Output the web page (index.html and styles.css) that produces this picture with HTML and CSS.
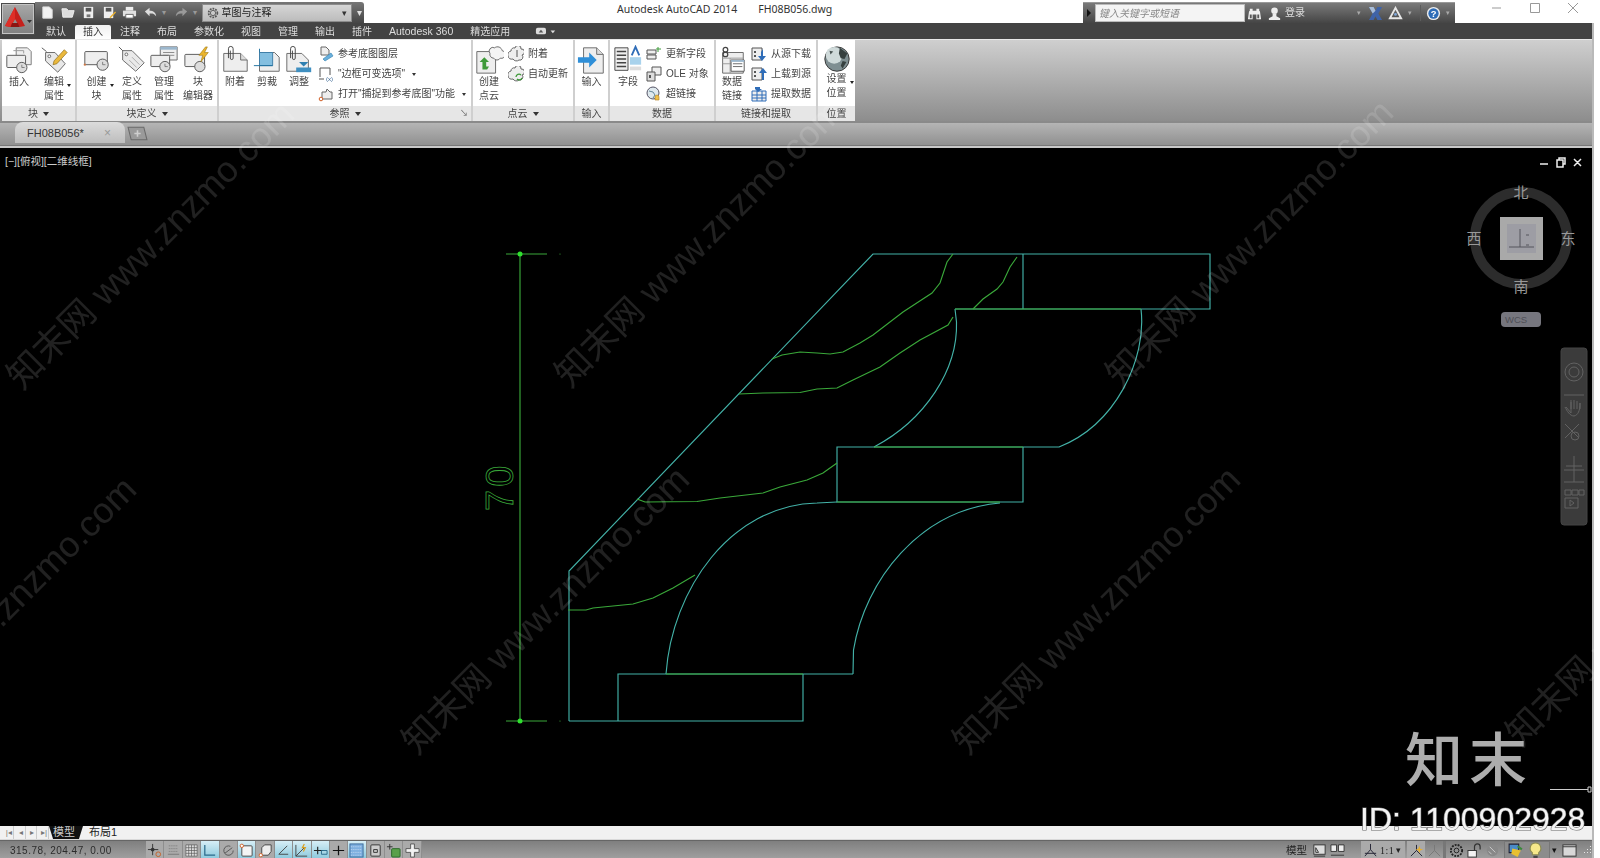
FILE: index.html
```html
<!DOCTYPE html>
<html lang="zh">
<head>
<meta charset="utf-8">
<title>Autodesk AutoCAD 2014</title>
<link rel="stylesheet" href="styles.css">
</head>
<body>
<div class="app">
  <header class="titlebar">
    <div class="appbtn"><svg viewBox="0 0 34 32" width="34" height="32"><path d="M14 4 L24 23 L18.500 24 L14 16 L9.500 24 L4 23 Z" fill="#c5201c"/><path d="M14 4 L14 16 L9.500 24 L4 23 Z" fill="#df2f28"/><path d="M11 20 H17 L18.500 24 H9.500 Z" fill="#8e1512"/><path d="M26 17h5l-2.500 3z" fill="#333"/></svg></div>
    <div class="qat">
      <svg class="q" viewBox="0 0 16 16"><path d="M3 2h7l3 3v9H3z" fill="#f2f2f2" stroke="#ddd"/></svg>
      <svg class="q" viewBox="0 0 16 16"><path d="M1 4h5l2 2h6l-2 7H2z" fill="#ddd" stroke="#eee"/></svg>
      <svg class="q" viewBox="0 0 16 16"><path d="M3 2h10v12H3z" fill="#eee"/><path d="M5 3h6v4H5z" fill="#555"/><path d="M6 10h4v3H6z" fill="#777"/></svg>
      <svg class="q" viewBox="0 0 16 16"><path d="M2 2h10v12H2z" fill="#eee"/><path d="M4 3h6v4H4z" fill="#555"/><path d="M9 14l6-6-1-1-6 6z" fill="#e9b02c"/></svg>
      <svg class="q" viewBox="0 0 16 16"><path d="M4 2h8v4H4z" fill="#eee"/><path d="M1 6h14v6H1z" fill="#e0e0e0"/><path d="M4 10h8v4H4z" fill="#fff" stroke="#666"/></svg>
      <svg class="q" viewBox="0 0 16 16"><path d="M2 7l5-4v3c4 0 7 2 7 6-2-3-4-3-7-3v3z" fill="#ddd"/></svg>
      <span class="qdd">▾</span>
      <svg class="q" viewBox="0 0 16 16"><path d="M14 7L9 3v3C5 6 2 8 2 12c2-3 4-3 7-3v3z" fill="#9a9a9a"/></svg>
      <span class="qdd">▾</span>
      <div class="combo"><svg viewBox="0 0 16 16" width="14" height="14"><circle cx="8" cy="8" r="5" fill="none" stroke="#555" stroke-width="2" stroke-dasharray="2 1.200"/><circle cx="8" cy="8" r="3" fill="none" stroke="#555"/></svg><span class="combo-t">草图与注释</span><span class="combo-a">▾</span></div>
      <span class="qmore">▾</span>
    </div>
    <div class="apptitle"><span>Autodesk AutoCAD 2014</span><span>FH08B056.dwg</span></div>
    <div class="infobar">
      <span class="tri"></span>
      <span class="search">键入关键字或短语</span>
      <svg class="ib b1" viewBox="0 0 16 16"><path d="M2 7a2 2 0 0 1 1-2V3h3v2h4V3h3v2a2 2 0 0 1 1 2l1 7h-5V9H6v5H1z" fill="#eee"/><path d="M3 9h2v4H3zM11 9h2v4h-2z" fill="#555"/></svg>
      <svg class="ib" viewBox="0 0 16 16"><circle cx="8" cy="5" r="3.500" fill="#eee"/><path d="M6 8h4v3l4 2v2H2v-2l4-2z" fill="#eee"/></svg>
      <span class="login">登录</span>
      <span class="idd d1">▾</span>
      <svg class="ib" viewBox="0 0 16 16"><path d="M1 1h5l2 4 2-4h5l-4 7 4 7h-5l-2-4-2 4H1l4-7z" fill="#3f63a8"/><path d="M1 1h5l2 4-3 3z" fill="#a9bdd8"/></svg>
      <svg class="ib" viewBox="0 0 16 16"><path d="M8 2l6 11H2z" fill="none" stroke="#e8e8e8" stroke-width="2"/><circle cx="8" cy="9" r="1.500" fill="#7ea6d8"/></svg>
      <span class="idd">▾</span>
      <span class="isep"></span>
      <svg class="ib" viewBox="0 0 16 16"><circle cx="8" cy="8" r="7" fill="#eee"/><circle cx="8" cy="8" r="5.500" fill="#2f6db8"/><text x="8" y="11.500" text-anchor="middle" class="qm">?</text></svg>
      <span class="idd">▾</span>
    </div>
    <div class="winctl">
      <svg viewBox="0 0 12 12" width="12" height="12"><path d="M1 6h9" stroke="#999"/></svg>
      <svg viewBox="0 0 12 12" width="12" height="12"><path d="M1.500 1.500h9v9h-9z" fill="none" stroke="#999"/></svg>
      <svg viewBox="0 0 12 12" width="12" height="12"><path d="M1 1l10 10M11 1L1 11" stroke="#999"/></svg>
    </div>
  </header>

  <div class="main">
    <nav class="tabs">
      <span>默认</span><span class="on">插入</span><span>注释</span><span>布局</span><span>参数化</span><span>视图</span><span>管理</span><span>输出</span><span>插件</span><span class="lat">Autodesk 360</span><span>精选应用</span>
      <svg class="tabico" viewBox="0 0 24 12" width="22" height="11"><rect x="1" y="2" width="11" height="7" rx="2" fill="#ddd"/><path d="M4 7l2.500-3L9 7z" fill="#555"/><path d="M17 5h5l-2.500 3z" fill="#ddd"/></svg>
    </nav>

    <section class="ribbon">
      <div class="panel p1">
        <div class="body cols-a">
          <div class="big"><svg class="i32" viewBox="0 0 32 32"><path d="M13 3h12l4 4v14H13z" fill="#eee" stroke="#777"/><path d="M10 6h11v3" fill="none" stroke="#999"/><rect x="3" y="11" width="20" height="13" rx="1" fill="#eee" stroke="#555"/><circle cx="19" cy="24" r="5.500" fill="#ddd" stroke="#555"/><path d="M19 21v3h3" fill="none" stroke="#555" stroke-width=".7"/></svg><span class="lbl">插入</span></div>
          <div class="big"><svg class="i32" viewBox="0 0 32 32"><path d="M3 3l5 4" stroke="#555"/><path d="M7 8h10l11 12-8 9L7 17z" fill="#e8e8e8" stroke="#666"/><circle cx="11" cy="12" r="1.500" fill="#fff" stroke="#666"/><path d="M16 17l11-12 3 3-11 12-4 1z" fill="#eab83c" stroke="#8a6a16" stroke-width=".7"/></svg><span class="lbl">编辑<br>属性<i class="dd"></i></span></div>
        </div>
        <div class="ptitle">块<i class="pa"></i></div>
      </div>
      <div class="panel p2">
        <div class="body cols-b">
          <div class="big"><svg class="i32" viewBox="0 0 32 32"><rect x="3" y="7" width="24" height="14" rx="1" fill="#eee" stroke="#555"/><circle cx="22" cy="21" r="6" fill="#ddd" stroke="#555"/><path d="M22 18v3h3" fill="none" stroke="#555" stroke-width=".7"/><circle cx="3" cy="21" r="1.200" fill="#c74"/></svg><span class="lbl">创建<br>块<i class="dd"></i></span></div>
          <div class="big"><svg class="i32" viewBox="0 0 32 32"><path d="M2 2l5 5" stroke="#555"/><path d="M6 6h10l13 13-9 9L6 16z" fill="#eaeaea" stroke="#666"/><circle cx="10" cy="10" r="1.500" fill="#fff" stroke="#666"/><path d="M13 16l8 8M16 13l8 8" stroke="#aaa"/></svg><span class="lbl">定义<br>属性</span></div>
          <div class="big"><svg class="i32" viewBox="0 0 32 32"><path d="M12 2h18v14H12z" fill="#eee" stroke="#666"/><path d="M12 2h18v3H12z" fill="#9bb6cc"/><path d="M15 8h12M15 11h12" stroke="#888"/><rect x="2" y="11" width="20" height="12" rx="1" fill="#eee" stroke="#555"/><circle cx="17" cy="23" r="5.500" fill="#ddd" stroke="#555"/><path d="M17 20v3h3" fill="none" stroke="#555" stroke-width=".7"/></svg><span class="lbl">管理<br>属性</span></div>
          <div class="big"><svg class="i32" viewBox="0 0 32 32"><rect x="2" y="10" width="21" height="13" rx="1" fill="#eee" stroke="#555"/><circle cx="18" cy="23" r="5.500" fill="#ddd" stroke="#555"/><path d="M24 2l-7 9h4l-2 7 8-10h-4l3-6z" fill="#eab42c" stroke="#9a7410" stroke-width=".6"/></svg><span class="lbl">块<br>编辑器</span></div>
        </div>
        <div class="ptitle">块定义<i class="pa"></i></div>
      </div>
      <div class="panel p3">
        <div class="body cols-c">
          <div class="big"><svg class="i32" viewBox="0 0 32 32"><path d="M4 9h18l7 7v12H4z" fill="#eee" stroke="#666"/><path d="M22 9v7h7" fill="#ddd" stroke="#666"/><path d="M9 14V4a2 2 0 0 1 5 0v10a1.500 1.500 0 0 1-3 0V6" fill="none" stroke="#444"/></svg><span class="lbl">附着</span></div>
          <div class="big"><svg class="i32" viewBox="0 0 32 32"><path d="M8 8h16l5 5v15H8z" fill="#eee" stroke="#666"/><path d="M8 8h14v14H8z" fill="#84bfe0" stroke="#3c7da8"/><path d="M2 22h20M8 4v4" stroke="#1d6f9e"/></svg><span class="lbl">剪裁</span></div>
          <div class="big"><svg class="i32" viewBox="0 0 32 32"><path d="M3 9h16l7 7v12H3z" fill="#eee" stroke="#666"/><path d="M7 14V4a2 2 0 0 1 5 0v10a1.500 1.500 0 0 1-3 0V6" fill="none" stroke="#444"/><path d="M13 24h16v5H13z" fill="#3f8fc0"/><path d="M21 23l-5-5h10z" fill="#2f7fb0"/></svg><span class="lbl">调整</span></div>
          <div class="list">
            <div class="row"><svg class="i16" viewBox="0 0 16 16"><path d="M3 1h5l3 3v5H3z" fill="#eee" stroke="#666"/><path d="M5 13l8-6 2 3-8 5z" fill="#6ab0dc" stroke="#2f7fb0" stroke-width=".6"/></svg><span>参考底图图层</span></div>
            <div class="row"><svg class="i16" viewBox="0 0 16 16"><path d="M2 11V2h10v7" fill="none" stroke="#555"/><path d="M1 13h5" stroke="#555"/><text x="8" y="15" class="xt">(x)</text></svg><span>"边框可变选项"<i class="rd"></i></span></div>
            <div class="row"><svg class="i16" viewBox="0 0 16 16"><path d="M4 6h4l1-3 3 3h2v7H4z" fill="#eee" stroke="#666"/><circle cx="3" cy="13" r="1.800" fill="#fff" stroke="#d2622a"/></svg><span>打开"捕捉到参考底图"功能<i class="rd"></i></span></div>
          </div>
        </div>
        <div class="ptitle">参照<i class="pa"></i><i class="corner">↘</i></div>
      </div>
      <div class="panel p4">
        <div class="body cols-d">
          <div class="big"><svg class="i32" viewBox="0 0 32 32"><path d="M3 7h20v23H3z" fill="#eee" stroke="#666"/><path d="M17 9a4 4 0 0 1 5-6 5 5 0 0 1 8 3 4 4 0 0 1-2 8 4 4 0 0 1-7 0 4 4 0 0 1-4-5z" fill="#f4f4f4" stroke="#666"/><path d="M14 26H9v-8H6l5-5 5 5h-3v5h3z" fill="#3f9a3a"/></svg><span class="lbl">创建<br>点云</span></div>
          <div class="list">
            <div class="row"><svg class="i16" viewBox="0 0 16 16"><path d="M3 5a3 3 0 0 1 4-3 3 3 0 0 1 6 1 3 3 0 0 1 1 6 3 3 0 0 1-3 5 4 4 0 0 1-6-1 3 3 0 0 1-2-8z" fill="#eee" stroke="#666"/><path d="M9 4v7" stroke="#555"/></svg><span>附着</span></div>
            <div class="row"><svg class="i16" viewBox="0 0 16 16"><path d="M3 5a3 3 0 0 1 4-3 3 3 0 0 1 6 1 3 3 0 0 1 1 6 3 3 0 0 1-3 5 4 4 0 0 1-6-1 3 3 0 0 1-2-8z" fill="#eee" stroke="#666"/><path d="M8 11a3 3 0 0 1 5-2M14 12a3 3 0 0 1-5 1" fill="none" stroke="#3f9a3a" stroke-width="1.300"/></svg><span>自动更新</span></div>
          </div>
        </div>
        <div class="ptitle">点云<i class="pa"></i></div>
      </div>
      <div class="panel p5">
        <div class="body">
          <div class="big"><svg class="i32" viewBox="0 0 32 32"><path d="M7 3h14l7 7v20H7z" fill="#eee" stroke="#666"/><path d="M21 3v7h7" fill="#ddd" stroke="#666"/><path d="M1 13h12V8l8 8-8 8v-5H1z" fill="#2f8fd8"/></svg><span class="lbl">输入</span></div>
        </div>
        <div class="ptitle">输入</div>
      </div>
      <div class="panel p6">
        <div class="body cols-e">
          <div class="big"><svg class="i32" viewBox="0 0 32 32"><path d="M2 3h14v24H2z" fill="#eee" stroke="#444"/><path d="M4 7h10M4 11h10M4 15h10M4 19h10M4 23h10" stroke="#444" stroke-width="1.500"/><path d="M18 13h12v8H18z" fill="#a8d2ec"/><path d="M18 23h12v4H18z" fill="#ddd"/><path d="M20 11l4-9 4 9" fill="none" stroke="#2f6db8" stroke-width="2"/></svg><span class="lbl">字段</span></div>
          <div class="list">
            <div class="row"><svg class="i16" viewBox="0 0 16 16"><path d="M1 4h9v4H1zM1 9h9v4H1z" fill="#eee" stroke="#555"/><path d="M12 1v5M10 3h5" stroke="#3f9a3a"/></svg><span>更新字段</span></div>
            <div class="row"><svg class="i16" viewBox="0 0 16 16"><path d="M6 1h9v8H6z" fill="#eee" stroke="#555"/><path d="M1 6h8v9H1z" fill="#ddd" stroke="#555"/><path d="M3 9h2v3H3z" fill="#555"/></svg><span>OLE 对象</span></div>
            <div class="row"><svg class="i16" viewBox="0 0 16 16"><circle cx="7" cy="7" r="6" fill="#dfe9ee" stroke="#556"/><path d="M3 5l4 1 2 3-2 3" fill="none" stroke="#689"/><path d="M9 11a2 2 0 0 1 4 0v3H9z" fill="#f0c24a" stroke="#b07b18" stroke-width=".6"/></svg><span>超链接</span></div>
          </div>
        </div>
        <div class="ptitle">数据</div>
      </div>
      <div class="panel p7">
        <div class="body cols-f">
          <div class="big"><svg class="i32" viewBox="0 0 32 32"><path d="M6 8h22v22H6z" fill="#eee" stroke="#666"/><path d="M6 14h22M6 20h22M14 14v16" stroke="#999"/><path d="M15 16h14v12H15z" fill="#fff" stroke="#555"/><path d="M17 20h10M17 23h10" stroke="#666"/><path d="M15 16h14v2H15z" fill="#9bb6cc"/><circle cx="9" cy="5" r="2.500" fill="none" stroke="#444" stroke-width="1.300"/><circle cx="9" cy="10" r="2.500" fill="none" stroke="#444" stroke-width="1.300"/></svg><span class="lbl">数据<br>链接</span></div>
          <div class="list">
            <div class="row"><svg class="i16" viewBox="0 0 16 16"><path d="M1 2h10v12H1z" fill="#eee" stroke="#555"/><path d="M3 5h2v2H3zM3 9h2v2H3z" fill="#555"/><path d="M12 3v7h3l-4 5-4-5h3V6z" fill="#2f6db8"/></svg><span>从源下载</span></div>
            <div class="row"><svg class="i16" viewBox="0 0 16 16"><path d="M1 2h10v12H1z" fill="#eee" stroke="#555"/><path d="M3 5h2v2H3zM3 9h2v2H3z" fill="#555"/><path d="M11 14V7H8l4-5 4 5h-3v7z" fill="#2f6db8"/></svg><span>上载到源</span></div>
            <div class="row"><svg class="i16" viewBox="0 0 16 16"><path d="M1 5h14v10H1z" fill="#eee" stroke="#2f6db8"/><path d="M1 9h14M1 12h14M6 5v10M11 5v10" stroke="#2f6db8"/><path d="M4 1h5v2h2l-4 3-3-3z" fill="#2f6db8"/></svg><span>提取数据</span></div>
          </div>
        </div>
        <div class="ptitle">链接和提取</div>
      </div>
      <div class="panel p8">
        <div class="body">
          <div class="big"><svg class="i32" viewBox="0 0 32 32"><circle cx="16" cy="15" r="13" fill="#7f8f92" stroke="#333"/><circle cx="13" cy="11" r="9" fill="#cfdada"/><path d="M19 3l8 6-3 6-4-1-2-5zM22 17l4 1-4 7-2-3z" fill="#36403f"/><path d="M8 6l4 1-3 3z" fill="#4a5554"/></svg><span class="lbl tall">设置<br>位置<i class="dd"></i></span></div>
        </div>
        <div class="ptitle">位置</div>
      </div>
    </section>

    <div class="filetabs">
      <div class="ftab"><span>FH08B056*</span><em>×</em></div>
      <div class="fnew"><svg viewBox="0 0 20 14" width="21" height="15"><path d="M1 1h15l3 12H4z" fill="#9a9a9a" stroke="#6a6a6a"/><path d="M10 4v6M7 7h6" stroke="#cfcfcf" stroke-width="1.500"/></svg></div>
    </div>

    <div class="canvas">
      <svg class="cad" viewBox="0 148 1592 678" width="1592" height="678">
        <text x="5" y="165" class="vp">[−][俯视][二维线框]</text>
        <g class="dim">
          <path d="M520 254V721M506 254H547M506 721H547"/>
          <circle cx="520" cy="254" r="2.500" class="dot"/><circle cx="520" cy="721" r="2.500" class="dot"/>
          <circle cx="560" cy="254" r=".6" class="speck"/><circle cx="560" cy="721" r=".6" class="speck"/>
          <text transform="translate(513 511) rotate(-90)" class="seventy">70</text>
        </g>
        <g class="cy">
          <path d="M569 721V571L873 254H1210V309H955M1023 254V309H1210"/>
          <path d="M955 309L956.500 322C958 370 925 420 874 447"/>
          <path d="M1141 309C1147 360 1115 425 1059 447H837V502H1023V447"/>
          <path d="M569 721H803V674H618V721M853 674H803"/>
          <path d="M666 674C672 590 730 505 817 503L837 502"/>
          <path d="M853 674L853.500 650C865 580 920 510 1000 503"/>
        </g>
        <g class="gr">
          <path d="M772 359L782 355 800 352 817 353 830 354 843 352 860 343 873 335 903 312 932 293 940 283 947 262 953 254"/>
          <path d="M739 394L763 393 800 392.500 817 389 837 388 853 380 880 367 900 353 920 340 948 325 953 317"/>
          <path d="M973 309L983 299 997 289 1003 282 1010 267 1017 257"/>
          <path d="M637 499L645 502 697 501.500 720 498 763 493 780 487 807 480 823 473 837 463"/>
          <path d="M568 610L586 610 593 608 633 604 653 598 673 588 695 575"/>
          <path d="M874 447H1023M955 309H1141M837 502H1000"/>
          <path d="M666 674H803"/>
        </g>
        <g class="winbtns">
          <path d="M1540 164h8M1557 160h6v7h-6zM1559 160v-2h6v6h-2M1574 159l7 7M1581 159l-7 7"/>
        </g>
        <circle cx="1521" cy="238" r="46" class="ring"/>
        <rect x="1500" y="217" width="43" height="43" class="cube"/>
        <rect x="1507" y="224" width="29" height="29" class="cube2"/>
        <path d="M1509 247h25M1520 229v18M1526 235h3M1526 245h3" class="cubeg"/>
        <text x="1521" y="198" class="cp">北</text>
        <text x="1521" y="292" class="cp">南</text>
        <text x="1474" y="244" class="cp">西</text>
        <text x="1568" y="244" class="cp">东</text>
        <rect x="1501" y="312" width="40" height="15" rx="4" class="wcsb"/>
        <text x="1505" y="323" class="wcs">WCS</text>
        <rect x="1561" y="348" width="26" height="177" rx="3" class="nav"/>
        <g class="navg">
          <circle cx="1574" cy="372" r="9"/><circle cx="1574" cy="372" r="5"/>
          <path d="M1564 395h20"/>
          <path d="M1566 407l5 6v-11m0 7v-9m3 9v-9m3 9v-8m3 8v-6c0 8-2 12-6 13-4 0-7-5-9-9"/>
          <path d="M1565 424l14 14M1579 424l-14 14"/><circle cx="1575" cy="436" r="4"/>
          <path d="M1574 456v26M1566 466h16M1564 470h20"/>
          <path d="M1564 482h20M1565 490h6v5h-6zM1572 490h6v5h-6zM1579 490h5v5h-5zM1565 498h13v10h-13zM1570 500l4 3-4 3z"/>
        </g>
      </svg>
    </div>

    <div class="layouttabs">
      <div class="navbtns"><span>|◂</span><span>◂</span><span>▸</span><span>▸|</span></div>
      <span class="lt on">模型</span><span class="lt">布局1</span>
    </div>

    <footer class="status">
      <span class="coords">315.78, 204.47, 0.00</span>
      <div class="sbtns">
        <span class="sb"><svg viewBox="0 0 16 16"><path d="M6 1v12M1 7h11" stroke="#333"/><circle cx="6" cy="7" r="2" fill="#333"/><circle cx="12" cy="12" r="2.500" fill="none" stroke="#c5622a"/></svg></span>
        <span class="sb"><svg viewBox="0 0 16 16"><path d="M3 3h10M3 6h10M3 9h10" stroke="#777" stroke-dasharray="1 1"/><path d="M2 12h12" stroke="#777"/></svg></span>
        <span class="sb"><svg viewBox="0 0 16 16"><path d="M2 2h12v12H2zM2 5h12M2 8h12M2 11h12M5 2v12M8 2v12M11 2v12" fill="#ddd" stroke="#555" stroke-width=".7"/></svg></span>
        <span class="sb on"><svg viewBox="0 0 16 16"><path d="M3 2v11h11" fill="none" stroke="#2a6a8a" stroke-width="1.300"/></svg></span>
        <span class="sb"><svg viewBox="0 0 16 16"><path d="M13 8a5 5 0 1 1-3-4.500" fill="none" stroke="#555"/><path d="M4 11l8-6" stroke="#555"/></svg></span>
        <span class="sb on"><svg viewBox="0 0 16 16"><rect x="3" y="3" width="11" height="11" rx="1" fill="#f4f4f4" stroke="#444"/><circle cx="3" cy="3" r="1.800" fill="#fff" stroke="#d2622a"/></svg></span>
        <span class="sb"><svg viewBox="0 0 16 16"><path d="M4 12V5l3-3h7v7l-3 4H4z" fill="#eee" stroke="#444"/><circle cx="3" cy="13" r="1.800" fill="#fff" stroke="#d2622a"/></svg></span>
        <span class="sb on"><svg viewBox="0 0 16 16"><path d="M12 3L3 12h10" fill="none" stroke="#444"/></svg></span>
        <span class="sb on"><svg viewBox="0 0 16 16"><path d="M2 2v12h12M2 14l9-9" fill="none" stroke="#444"/><path d="M11 1l-2 4h3l-2 4" fill="none" stroke="#d9a020" stroke-width="1.300"/></svg></span>
        <span class="sb on"><svg viewBox="0 0 16 16"><path d="M1 8h10M5 4v8" stroke="#222" stroke-width="1.200"/><path d="M9 8h6v4H9z" fill="none" stroke="#2a6a8a"/></svg></span>
        <span class="sb"><svg viewBox="0 0 16 16"><path d="M8 3v10M2 8h12" stroke="#111" stroke-width="1.300"/></svg></span>
        <span class="sb on"><svg viewBox="0 0 16 16"><rect x="1" y="1" width="14" height="14" fill="#7fb0e0" stroke="#3a6a9a"/><path d="M2 4h12M2 7h12M2 10h12M2 13h12" stroke="#c6dcf2" stroke-dasharray="1 1"/></svg></span>
        <span class="sb"><svg viewBox="0 0 16 16"><rect x="3" y="2" width="10" height="12" rx="1" fill="#ccc" stroke="#333"/><path d="M6 7h4v3H6z" fill="none" stroke="#333"/></svg></span>
        <span class="sb"><svg viewBox="0 0 16 16"><rect x="6" y="6" width="9" height="9" rx="1" fill="#5aa04a" stroke="#2a6a2a"/><path d="M1 4h6M4 1v6" stroke="#333"/></svg></span>
        <span class="sb"><svg viewBox="0 0 16 16"><path d="M6 1h4v5h5v4h-5v5H6v-5H1V6h5z" fill="#f2f2f2" stroke="#555"/></svg></span>
      </div>
      <div class="sright">
        <span class="mdl">模型</span>
        <span class="sb2"><svg viewBox="0 0 16 16"><rect x="2" y="2" width="12" height="10" fill="#ddd" stroke="#333"/><path d="M4 10V5l3 5zM2 14h12" stroke="#333" fill="none"/></svg></span>
        <span class="sb2"><svg viewBox="0 0 16 16"><path d="M1 2h6v7H1zM9 2h6v7H9z" fill="#eee" stroke="#333"/><path d="M1 13h14" stroke="#333"/></svg></span>
        <span class="sgap"></span>
        <span class="scale"><svg viewBox="0 0 16 16" width="15" height="15"><path d="M8 1v6L2 14M8 7l6 7M2 11h12" fill="none" stroke="#223"/></svg><b>1:1</b><i>▾</i></span>
        <span class="sb2 pad"><svg viewBox="0 0 16 16"><path d="M8 2v6L2 14M8 8l6 6" fill="none" stroke="#223"/><path d="M11 3l1 3 3 1-3 1-1 3-1-3-3-1 3-1z" fill="#e8b030"/></svg></span>
        <span class="sb2"><svg viewBox="0 0 16 16"><path d="M8 2v6L2 14M8 8l6 6" fill="none" stroke="#777"/></svg></span>
        <span class="ssep"></span>
        <span class="sb2"><svg viewBox="0 0 16 16"><circle cx="8" cy="8" r="6" fill="none" stroke="#222" stroke-width="2" stroke-dasharray="2 1.200"/><circle cx="8" cy="8" r="2.500" fill="none" stroke="#222"/></svg></span>
        <span class="sb2"><svg viewBox="0 0 16 16"><rect x="1" y="8" width="9" height="7" fill="#f2f2f2" stroke="#333"/><path d="M8 8V4a3 3 0 0 1 6 0v3" fill="none" stroke="#333" stroke-width="1.300"/></svg></span>
        <span class="sb2"><svg viewBox="0 0 16 16"><circle cx="8" cy="8" r="6" fill="#888"/><path d="M5 4l6 6M4 9l3 3" stroke="#ccc"/></svg></span>
        <span class="sbox"><svg viewBox="0 0 16 16" width="17" height="17"><path d="M2 2h9v8H2z" fill="#4a8ac8" stroke="#223"/><path d="M5 6l8 2-3 6-6-3z" fill="#e8c030"/><path d="M10 4l4 3" stroke="#3a8a3a" stroke-width="2"/></svg><svg viewBox="0 0 16 16" width="17" height="17"><path d="M8 1a5 5 0 0 1 3 9v2H5v-2a5 5 0 0 1 3-9z" fill="#f6e88a" stroke="#8a8a50"/><path d="M6 14h4" stroke="#444" stroke-width="2"/></svg></span>
        <span class="sarr">▾</span>
        <span class="sb2"><svg viewBox="0 0 16 16"><rect x="1" y="2" width="14" height="12" fill="#d8d8d8" stroke="#333"/><path d="M1 4h14" stroke="#333"/></svg></span>
        <span class="grip"><svg viewBox="0 0 12 12" width="12" height="12"><path d="M10 2h1v1h-1zM7 5h1v1H7zM10 5h1v1h-1zM4 8h1v1H4zM7 8h1v1H7zM10 8h1v1h-1z" fill="#e6e6e6"/></svg></span>
      </div>
    </footer>
  </div>
  <div class="sidemark"></div>

  <svg class="overlay" viewBox="0 0 1600 858" width="1600" height="858">
    <g class="wm">
      <text transform="translate(22 391) rotate(-45)">知末网 www.znzmo.com</text>
      <text transform="translate(570 389) rotate(-45)">知末网 www.znzmo.com</text>
      <text transform="translate(1121 389) rotate(-45)">知末网 www.znzmo.com</text>
      <text transform="translate(-136 766) rotate(-45)">知末网 www.znzmo.com</text>
      <text transform="translate(417 756) rotate(-45)">知末网 www.znzmo.com</text>
      <text transform="translate(968 756) rotate(-45)">知末网 www.znzmo.com</text>
      <text transform="translate(1521 748) rotate(-45)">知末网 www.znzmo.com</text>
    </g>
    <text x="1405" y="781" class="brand">知末</text>
    <path d="M1550 789.500H1588M1588 787h3v5h-3z" class="ucs"/>
    <text x="1360" y="830" class="idtxt">ID: 1100902928</text>
  </svg>
</div>
</body>
</html>
```

FILE: styles.css
```css
* { box-sizing: border-box; }
html, body { margin: 0; padding: 0; background: #fff; }
body { width: 1600px; height: 858px; overflow: hidden; font: 10px/14px "Liberation Sans", "Noto Sans CJK SC", sans-serif; color: #444; }
.app { position: relative; width: 1600px; height: 858px; }
svg { display: block; }
i, em { font-style: normal; }

/* title bar */
.titlebar { display: flex; height: 23px; align-items: flex-start; }
.appbtn { position: absolute; left: 1px; top: 3px; width: 34px; height: 32px; z-index: 3; background: linear-gradient(#a8a8a8, #7f7f7f); border: 1px solid #4a4a4a; box-shadow: inset 0 0 0 1px #c4c4c4; }
.appbtn svg { margin: -1px; }
.qat { display: flex; flex: none; align-items: center; margin: 2px 0 0 35px; width: 329px; height: 21px; padding-left: 5px; background: linear-gradient(#777, #454545); border-radius: 0 3px 0 0; filter: blur(.3px); }
.q { width: 15px; height: 15px; margin-right: 5.500px; flex: none; }
.qdd { width: 8px; margin-left: -3px; margin-right: 6px; color: #999; font-size: 8px; text-align: center; }
.combo { display: flex; flex: none; align-items: center; width: 150px; height: 18px; padding: 0 4px 0 3px; background: linear-gradient(#d6d6d6, #bcbcbc); border: 1px solid #8c8c8c; margin-left: -3px; }
.combo-t { margin-left: 2px; color: #222; font-size: 10px; }
.combo-a { margin-left: auto; color: #333; font-size: 9px; }
.qmore { margin-left: 3px; width: 10px; color: #e0e0e0; font-size: 10px; text-align: center; }
.apptitle { display: flex; flex: none; gap: 21px; margin: 1px 0 0 253px; width: 466px; font: 10.500px/16px "Noto Sans", sans-serif; color: #333; }
.infobar { display: flex; flex: none; align-items: center; width: 372px; height: 21px; margin-top: 2px; padding-left: 4px; background: linear-gradient(#7a7a7a, #454545); border-top: 1px solid #999; filter: blur(.3px); }
.tri { flex: none; border-left: 4px solid #111; border-top: 4px solid transparent; border-bottom: 4px solid transparent; margin-right: 4px; }
.search { flex: none; width: 150px; height: 18px; line-height: 17px; padding-left: 3px; background: #f4f4f4; border: 1px solid #bbb; color: #888; font-style: italic; }
.ib { width: 15px; height: 15px; flex: none; margin-left: 5px; }
.ib.b1 { margin-left: 2px; }
.login { flex: none; width: 26px; margin-left: 3px; color: #ddd; font-size: 10px; }
.idd { flex: none; width: 9px; margin-left: 2px; color: #aaa; font-size: 7px; text-align: center; }
.d1 { margin-left: 43px; }
.isep { flex: none; width: 1px; height: 16px; margin-left: 6px; background: #5c5c5c; }
.qm { font: bold 10px "Liberation Sans", sans-serif; fill: #fff; }
.winctl { display: flex; gap: 26px; margin: 2px 0 0 36px; }

/* main window */
.main { width: 1594px; height: 835px; border-right: 2px solid #b9b9b9; overflow: hidden; position: relative; background: #d9d9d9; }
.sidemark { position: absolute; right: 0; top: 18px; width: 6px; height: 12px; background: #2a5f9a; border-radius: 6px 0 0 6px; z-index: -1; }
.tabs { display: flex; gap: 17px; align-items: center; height: 16px; padding-left: 46px; background: #434343; color: #ddd; line-height: 15px; filter: blur(.3px); }
.tabs .on { margin: 2px -8px 0; padding: 0 8px; height: 14px; line-height: 14px; background: linear-gradient(#f0f0f0, #fff); color: #333; border-radius: 2px 2px 0 0; }
.tabs .lat { font-size: 10.500px; }
.tabico { margin-left: 8px; }

/* ribbon */
.ribbon { display: flex; height: 82px; padding-left: 2px; border-top: 1px solid #e8e8e8; background: linear-gradient(#cfcfcf, #8d8d8d); filter: blur(.3px); }
.panel { display: flex; flex-direction: column; background: #fff; border-right: 2px solid #cfcfcf; }
.p1 { width: 75px; } .p2 { width: 142px; } .p3 { width: 254px; } .p4 { width: 102px; }
.p5 { width: 35px; } .p6 { width: 106px; } .p7 { width: 102px; } .p8 { width: 37px; border-right: 0; }
.body { flex: 1; display: grid; padding-top: 5px; align-content: start; }
.cols-a { grid-template-columns: 34px 36px; }
.cols-b { grid-template-columns: 37px 34px 30px 38px; padding-left: 1px; }
.cols-c { grid-template-columns: 32px 32px 32px 1fr; }
.cols-d { grid-template-columns: 32px 1fr; }
.cols-e { grid-template-columns: 36px 1fr; }
.cols-f { grid-template-columns: 32px 1fr; }
.big { display: flex; flex-direction: column; align-items: center; text-align: center; }
.i32 { width: 30px; height: 30px; flex: none; }
.lbl { position: relative; white-space: nowrap; }
.lbl.tall { margin-top: -3px; }
.dd { position: absolute; right: -7px; top: 9px; border-top: 3px solid #222; border-left: 2px solid transparent; border-right: 2px solid transparent; }
.list { display: flex; flex-direction: column; gap: 4px; padding-top: 1px; margin-left: 3px; }
.cols-e .list { margin-left: 0; }
.row { display: flex; align-items: center; gap: 4px; height: 16px; white-space: nowrap; }
.i16 { width: 16px; height: 16px; flex: none; }
.xt { font: 6px "Liberation Sans", sans-serif; fill: #2f5f8f; }
.rd { display: inline-block; margin-left: 7px; vertical-align: middle; border-top: 3px solid #333; border-left: 2px solid transparent; border-right: 2px solid transparent; }
.ptitle { position: relative; height: 15px; line-height: 15px; text-align: center; background: #e6e6e6; color: #444; }
.pa { display: inline-block; margin-left: 5px; vertical-align: middle; border-top: 4px solid #333; border-left: 3px solid transparent; border-right: 3px solid transparent; }
.corner { position: absolute; right: 3px; top: 0; font-size: 8px; color: #555; }

/* file tabs */
.filetabs { display: flex; align-items: flex-end; gap: 2px; height: 27px; padding: 0 0 3px 15px; background: linear-gradient(#b5b5b5, #8e8e8e); border-top: 2px solid #8a8a8a; border-bottom: 2px solid #c8c8c8; box-shadow: inset 0 -1px 0 #777; }
.ftab { display: flex; align-items: center; justify-content: space-between; width: 110px; height: 21px; padding: 1px 14px 0 12px; background: linear-gradient(#dcdcdc, #bdbdbd); border-radius: 8px 8px 0 0; color: #333; font-size: 11px; }
.ftab em { color: #999; font-size: 12px; }
.fnew { margin-bottom: 2px; }

/* drawing */
.canvas { height: 678px; background: #000; }
.cad { background: #000; }
.vp { font-size: 10.500px; fill: #ccc; }
.dim path, .gr path { fill: none; stroke: #3aa83a; stroke-width: 1.150; }
.dot { fill: #2fe02f; }
.speck { fill: #3aa83a; }
.seventy { font: 38px "Liberation Sans", sans-serif; fill: none; stroke: #3aa83a; stroke-width: .8; letter-spacing: 3px; }
.cy path { fill: none; stroke: #43b2a8; stroke-width: 1.150; }
.winbtns path { fill: none; stroke: #eee; stroke-width: 1.500; }
.ring { fill: none; stroke: #2c2c2c; stroke-width: 10; }
.cube { fill: #a9a9a9; }
.cube2 { fill: #9d9da4; }
.cubeg { fill: none; stroke: #55555c; stroke-width: 1; }
.cp { font-size: 15px; fill: #999; text-anchor: middle; }
.wcsb { fill: #76767e; }
.wcs { font-size: 9.500px; fill: #4e4e56; }
.nav { fill: #3b3b3b; stroke: #444; }
.navg * { fill: none; stroke: #626262; stroke-width: 1; }

/* layout tabs */
.layouttabs { display: flex; align-items: center; height: 13px; padding-left: 5px; background: #f1f1f1; color: #222; line-height: 13px; }
.navbtns { display: flex; width: 44px; gap: 3px; color: #777; font-size: 8px; }
.navbtns span { width: 9px; text-align: center; border-right: 1px solid #ccc; }
.lt { padding: 0 8px 0 5px; font-size: 11px; }
.lt.on { width: 34px; padding: 0 4px; background: #111; color: #ccc; clip-path: polygon(0 0, 100% 0, 88% 100%, 12% 100%); margin-right: 1px; }

/* status */
.status { display: flex; align-items: center; height: 19px; margin-top: 1px; background: linear-gradient(#7f7f7f, #a0a0a0); border-top: 1px solid #666; filter: blur(.3px); }
.coords { flex: none; width: 146px; padding-left: 10px; color: #2c2c2c; font: 10px "Liberation Sans", sans-serif; white-space: pre; letter-spacing: .5px; }
.sbtns { display: flex; flex: none; }
.sb { display: flex; align-items: center; justify-content: center; width: 18.400px; height: 18px; background: #aaa; border-right: 1px solid #8e8e8e; }
.sb.on { background: linear-gradient(#d6eef6, #8ac8dc); }
.sb svg, .sb2 svg { width: 15px; height: 15px; }
.sright { display: flex; align-items: center; margin-left: auto; height: 18px; color: #222; }
.mdl { width: 24px; font-size: 10.500px; }
.sb2 { display: flex; align-items: center; justify-content: center; width: 18px; height: 18px; }
.sb2.pad { margin-left: 2px; background: #aaa; }
.sgap { width: 15px; }
.scale { display: flex; align-items: center; gap: 2px; width: 44px; padding-left: 2px; height: 18px; background: #aaa; }
.scale b { font: 10px "Liberation Serif", serif; letter-spacing: .5px; }
.scale i { font-size: 9px; }
.ssep { width: 3px; height: 18px; background: #777; margin: 0 1px 0 0; }
.sbox { display: flex; gap: 3px; align-items: center; margin-left: 3px; padding: 0 2px; height: 18px; width: 46px; background: #8c8c8c; border: 1px solid #777; }
.sarr { margin-left: 2px; width: 8px; font-size: 9px; color: #111; }
.grip { width: 12px; margin-left: 2px; }

/* page overlay */
.overlay { position: absolute; left: 0; top: 0; pointer-events: none; z-index: 5; }
.wm text { font: 36px "Liberation Sans", "Noto Sans CJK SC", sans-serif; fill: rgba(255, 255, 255, .13); }
.brand { font: 500 58px "Noto Sans CJK SC", sans-serif; fill: #adadad; letter-spacing: 6px; }
.ucs { fill: none; stroke: #ccc; stroke-width: 1; }
.idtxt { font: 32px "Liberation Sans", sans-serif; fill: #f4f4f4; stroke: #6a6a6a; stroke-width: 1.200; paint-order: stroke; }
```
